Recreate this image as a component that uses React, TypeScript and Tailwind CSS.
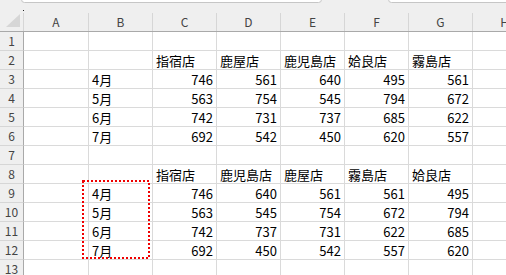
import React from "react";

type Cell = string | number | null;

const COLS = ["A", "B", "C", "D", "E", "F", "G", "H"];
const COL_W = ["w-[65px]", "w-[64px]", "w-[64px]", "w-[64px]", "w-[64px]", "w-[64px]", "w-[64px]", "w-[64px]"];

const ROWS: Cell[][] = [
  [null, null, null, null, null, null, null, null],
  [null, null, "指宿店", "鹿屋店", "鹿児島店", "姶良店", "霧島店", null],
  [null, "4月", 746, 561, 640, 495, 561, null],
  [null, "5月", 563, 754, 545, 794, 672, null],
  [null, "6月", 742, 731, 737, 685, 622, null],
  [null, "7月", 692, 542, 450, 620, 557, null],
  [null, null, null, null, null, null, null, null],
  [null, null, "指宿店", "鹿児島店", "鹿屋店", "霧島店", "姶良店", null],
  [null, "4月", 746, 640, 561, 561, 495, null],
  [null, "5月", 563, 545, 754, 672, 794, null],
  [null, "6月", 742, 737, 731, 622, 685, null],
  [null, "7月", 692, 450, 542, 557, 620, null],
  [null, null, null, null, null, null, null, null],
];

const FONT = { fontFamily: '"Noto Sans CJK JP", "Noto Sans", sans-serif' };

function ColumnHeader() {
  return (
    <div className="relative flex h-[32px] items-end border-b border-[#a9a9a9] bg-[#efefef]">
      {/* select-all corner */}
      <div className="relative h-[18px] w-[24px] shrink-0 border-r border-[#d6d6d6]">
        <svg className="absolute right-[3px] bottom-[4px]" width="14" height="13" viewBox="0 0 14 13">
          <polygon points="14,0 14,13 0,13" fill="#d6d6d6" />
        </svg>
      </div>
      {COLS.map((c, i) => (
        <div
          key={c}
          className={`${COL_W[i]} flex h-[18px] shrink-0 items-center justify-center border-r border-[#d6d6d6] pb-[1px] text-[12px] text-[#444]`}
        >
          {c}
        </div>
      ))}
      {/* ribbon edges peeking above the grid */}
      <div className="absolute top-[-4px] left-[21px] h-[7px] w-[301px] rounded-[4px] border border-[#c6c6c6] bg-white" />
      <div className="absolute top-[-4px] left-[388px] h-[7px] w-[140px] rounded-[4px] border border-[#c6c6c6] bg-white" />
      <div className="absolute top-[10px] left-[23px] h-[1px] w-[1px] bg-[#222]" />
    </div>
  );
}

function Row({ index, cells }: { index: number; cells: Cell[] }) {
  return (
    <div className="flex h-[19px]">
      <div className="flex w-[24px] shrink-0 items-center justify-center border-r border-b border-r-[#a9a9a9] border-b-[#d6d6d6] bg-[#efefef] text-[12px] text-[#444]">
        {index}
      </div>
      {cells.map((v, i) => (
        <div
          key={i}
          className={`${COL_W[i]} flex shrink-0 items-center overflow-hidden border-r border-b border-[#dadada] px-[3px] pt-[1px] text-[13px] whitespace-nowrap text-black ${
            typeof v === "number" ? "justify-end" : "justify-start"
          }`}
        >
          {v}
        </div>
      ))}
    </div>
  );
}

export default function App() {
  return (
    <div className="relative h-[275px] w-[506px] overflow-hidden bg-white" style={FONT}>
      <div className="w-max">
        <ColumnHeader />
        {ROWS.map((r, i) => (
          <Row key={i} index={i + 1} cells={r} />
        ))}
      </div>
      {/* copy marquee around B9:B12 */}
      <svg className="absolute top-0 left-0" width="506" height="275" shapeRendering="crispEdges">
        <rect x="83" y="181" width="66" height="77" fill="none" stroke="#f00000" strokeWidth="2" strokeDasharray="2 2" />
      </svg>
    </div>
  );
}
